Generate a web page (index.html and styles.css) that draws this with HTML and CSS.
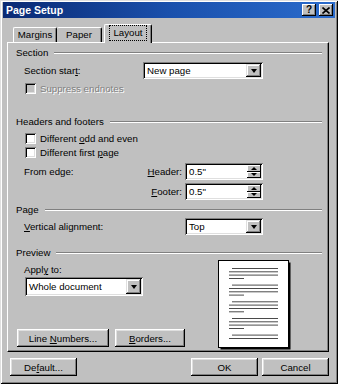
FILE: index.html
```html
<!DOCTYPE html>
<html>
<head>
<meta charset="utf-8">
<link rel="stylesheet" href="styles.css">
</head>
<body>
<div class="window">
  <div class="titlebar">
    <span class="title">Page Setup</span>
    <div class="tb-btns">
      <span class="tb-btn help">?</span>
      <span class="tb-btn close"><svg width="8" height="7" viewBox="0 0 8 7"><path d="M0.5 0.5 L7.5 6.5 M7.5 0.5 L0.5 6.5" stroke="#000" stroke-width="1.6" fill="none"/></svg></span>
    </div>
  </div>

  <div class="tabs">
    <div class="tab w-margins">Margins</div>
    <div class="tab w-paper">Paper</div>
    <div class="tab sel w-layout"><span class="focus">Layout</span></div>
  </div>

  <div class="panel">
    <div class="gtitle"><span>Section</span><i class="rule"></i></div>
    <div class="row r-start">
      <span class="lbl w-start">Section star<u>t</u>:</span>
      <div class="combo w120"><span class="val">New page</span><span class="arrow"><i class="tri-down"></i></span></div>
    </div>
    <div class="crow r-suppress disabled"><span class="cb"></span><span class="ctext">Suppress endnotes</span></div>

    <div class="gtitle g-hf"><span>Headers and footers</span><i class="rule"></i></div>
    <div class="crow r-odd"><span class="cb"></span><span class="ctext">Different <u>o</u>dd and even</span></div>
    <div class="crow r-first"><span class="cb"></span><span class="ctext">Different first <u>p</u>age</span></div>
    <div class="row r-header">
      <span class="lbl w-from">From edge:</span>
      <span class="lbl w-hdr"><u>H</u>eader:</span>
      <div class="spin"><span class="val">0.5"</span><span class="spin-btns"><span class="sb"><i class="tri-up"></i></span><span class="sb"><i class="tri-dn-s"></i></span></span></div>
    </div>
    <div class="row r-footer">
      <span class="lbl w-from"></span>
      <span class="lbl w-hdr"><u>F</u>ooter:</span>
      <div class="spin"><span class="val">0.5"</span><span class="spin-btns"><span class="sb"><i class="tri-up"></i></span><span class="sb"><i class="tri-dn-s"></i></span></span></div>
    </div>

    <div class="gtitle g-page"><span>Page</span><i class="rule"></i></div>
    <div class="row r-valign">
      <span class="lbl w-valign"><u>V</u>ertical alignment:</span>
      <div class="combo w78"><span class="val">Top</span><span class="arrow"><i class="tri-down"></i></span></div>
    </div>

    <div class="gtitle g-preview"><span>Preview</span><i class="rule"></i></div>
    <div class="pv-body">
      <div class="pv-left">
        <div class="apply-lbl">Appl<u>y</u> to:</div>
        <div class="combo w118 apply-combo"><span class="val">Whole document</span><span class="arrow"><i class="tri-down"></i></span></div>
        <div class="pv-btns">
          <span class="btn w92"><span>Line <u>N</u>umbers...</span></span>
          <span class="btn w70"><span><u>B</u>orders...</span></span>
        </div>
      </div>
      <div class="pv-page">
        <svg width="73" height="90" viewBox="0 0 73 90">
          <rect x="2.5" y="2.5" width="70" height="87" fill="#000"/>
          <rect x="0.5" y="0.5" width="70" height="87" fill="#fff" stroke="#000" stroke-width="1"/>
          <g stroke="#4a4a4a" stroke-width="1">
            <path d="M14 8.5 H60 M11 11.8 H60 M11 15.1 H60 M11 18.5 H26"/>
            <path d="M14 25.1 H60 M11 28.5 H60 M11 31.8 H60 M11 35.1 H26"/>
            <path d="M14 41.8 H60 M11 45.1 H60 M11 48.5 H60 M11 51.8 H26"/>
            <path d="M14 58.5 H60 M11 61.8 H60 M11 65.1 H60 M11 68.5 H26"/>
            <path d="M14 75.1 H60 M11 78.5 H60"/>
          </g>
        </svg>
      </div>
    </div>
  </div>

  <div class="footer">
    <span class="btn w67"><span>De<u>f</u>ault...</span></span>
    <div class="footer-right">
      <span class="btn w67"><span>OK</span></span>
      <span class="btn w67"><span>Cancel</span></span>
    </div>
  </div>
</div>
</body>
</html>
```

FILE: styles.css
```css
* { box-sizing: border-box; }
html, body { margin: 0; padding: 0; background: #c0c0c0; }
body {
  font-family: "Liberation Sans", Arial, sans-serif;
  font-size: 9.7px;
  color: #000;
}
u { text-decoration: underline; text-underline-offset: 1px; }

.window {
  width: 338px;
  height: 384px;
  padding: 2px 3px 0 3px;
  background: #c0c0c0;
  box-shadow: inset 1px 1px #dfdfdf, inset -1px -1px #000, inset 2px 2px #fff, inset -2px -2px #808080;
  display: flex;
  flex-direction: column;
}

/* title bar */
.titlebar {
  height: 16px;
  background: linear-gradient(90deg, #0a2a74 0%, #1a50ac 50%, #2a6bcc 100%);
  display: flex;
  align-items: center;
  justify-content: space-between;
  padding-left: 3px;
}
.title {
  color: #fff;
  font-weight: bold;
  font-size: 10.5px;
}
.tb-btns { display: flex; gap: 3px; margin-right: 2px; }
.tb-btn {
  width: 14px;
  height: 12px;
  background: #c0c0c0;
  box-shadow: inset -1px -1px #000, inset 1px 1px #fff, inset -2px -2px #808080;
  display: flex;
  align-items: center;
  justify-content: center;
  font-weight: bold;
  font-size: 10px;
  line-height: 12px;
}
.tb-btn.help { padding-bottom: 1px; }

/* tabs */
.tabs {
  display: flex;
  align-items: flex-end;
  height: 18px;
  margin-top: 6px;
  padding-left: 10px;
  position: relative;
  z-index: 1;
}
.tab {
  height: 15px;
  background: #c0c0c0;
  border-left: 1px solid #fff;
  border-top: 1px solid #fff;
  border-right: 1px solid #000;
  border-radius: 2px 2px 0 0;
  box-shadow: inset -1px 0 #808080;
  display: flex;
  align-items: center;
  justify-content: center;
  line-height: 12px;
}
.w-margins { width: 44px; }
.w-paper { width: 45px; border-left: none; }
.w-layout { width: 48px; margin-left: 2px; }
.tab.sel {
  height: 19px;
  margin-bottom: -1px;
  padding-bottom: 2px;
}
.focus {
  outline: 1px dotted #000;
  outline-offset: 1px;
  padding: 0 2px;
}

/* panel */
.panel {
  width: 322px;
  height: 310px;
  margin-left: 4px;
  border: 1px solid;
  border-color: #fff #000 #000 #fff;
  box-shadow: inset -1px -1px #808080;
  padding: 4px 6px 0 8px;
}
.gtitle {
  display: flex;
  align-items: center;
  height: 12px;
  line-height: 12px;
}
.gtitle .rule {
  flex: 1;
  height: 2px;
  border-top: 1px solid #808080;
  border-bottom: 1px solid #fff;
  margin-left: 6px;
}
.g-hf { margin-top: 21px; }
.g-page { margin-top: 4px; }
.g-preview { margin-top: 12px; }

.row {
  display: flex;
  align-items: center;
  padding-left: 8px;
  height: 17px;
}
.lbl { display: block; white-space: nowrap; }
.w-start { width: 119px; }
.w-from { width: 110px; }
.w-hdr { width: 48px; text-align: right; margin-right: 3px; }
.w-valign { width: 161px; }
.r-start { margin-top: 3px; }
.r-header { margin-top: 4px; }
.r-footer { margin-top: 3px; }
.r-valign { margin-top: 2px; }

/* checkboxes */
.crow {
  display: flex;
  align-items: center;
  height: 13px;
  padding-left: 9px;
}
.r-suppress { margin-top: 3px; }
.r-odd { margin-top: 4px; }
.r-first { margin-top: 1px; }
.cb {
  width: 11px;
  height: 11px;
  background: #fff;
  box-shadow: inset 1px 1px #808080, inset -1px -1px #fff, inset 2px 2px #000, inset -2px -2px #dfdfdf;
  margin-right: 4px;
  flex: none;
}
.disabled .cb { background: #c0c0c0; }
.disabled .ctext { color: #808080; text-shadow: 1px 1px 0 #fff; }

/* combos */
.combo, .spin {
  height: 17px;
  background: #fff;
  box-shadow: inset 1px 1px #808080, inset -1px -1px #fff, inset 2px 2px #000, inset -2px -2px #dfdfdf;
  display: flex;
  align-items: center;
  padding: 2px;
}
.combo .val, .spin .val { flex: 1; padding-left: 2px; white-space: nowrap; }
.w120 { width: 120px; }
.w78 { width: 78px; }
.w118 { width: 118px; }
.spin { width: 78px; }
.arrow {
  width: 15px;
  height: 100%;
  background: #c0c0c0;
  box-shadow: inset -1px -1px #000, inset 1px 1px #dfdfdf, inset -2px -2px #808080, inset 2px 2px #fff;
  display: flex;
  align-items: center;
  justify-content: center;
}
.tri-down {
  width: 0; height: 0;
  border-left: 3.5px solid transparent;
  border-right: 3.5px solid transparent;
  border-top: 4px solid #000;
}
.spin-btns {
  width: 14px;
  height: 100%;
  display: flex;
  flex-direction: column;
}
.sb {
  flex: 1;
  background: #c0c0c0;
  box-shadow: inset -1px -1px #000, inset 1px 1px #fff;
  display: flex;
  align-items: center;
  justify-content: center;
}
.tri-up {
  width: 0; height: 0;
  border-left: 3px solid transparent;
  border-right: 3px solid transparent;
  border-bottom: 3px solid #000;
}
.tri-dn-s {
  width: 0; height: 0;
  border-left: 3px solid transparent;
  border-right: 3px solid transparent;
  border-top: 3px solid #000;
}

/* preview */
.pv-body { display: flex; }
.pv-left { width: 202px; }
.apply-lbl { margin-top: 5px; height: 12px; line-height: 12px; padding-left: 8px; }
.apply-combo { margin-top: 1px; margin-left: 9px; height: 19px; }
.pv-btns { display: flex; gap: 6px; margin-top: 33px; margin-left: 1px; }
.pv-page { margin-top: 1px; line-height: 0; }

/* buttons */
.btn {
  height: 18px;
  background: #c0c0c0;
  box-shadow: inset -1px -1px #000, inset 1px 1px #fff, inset -2px -2px #808080, inset 2px 2px #dfdfdf;
  display: flex;
  align-items: center;
  justify-content: center;
  white-space: nowrap;
}
.w92 { width: 92px; }
.w70 { width: 70px; }
.w67 { width: 67px; }

.footer {
  display: flex;
  justify-content: space-between;
  margin-top: 6px;
  padding-left: 7px;
  padding-right: 6px;
}
.footer-right { display: flex; gap: 4px; }
```
